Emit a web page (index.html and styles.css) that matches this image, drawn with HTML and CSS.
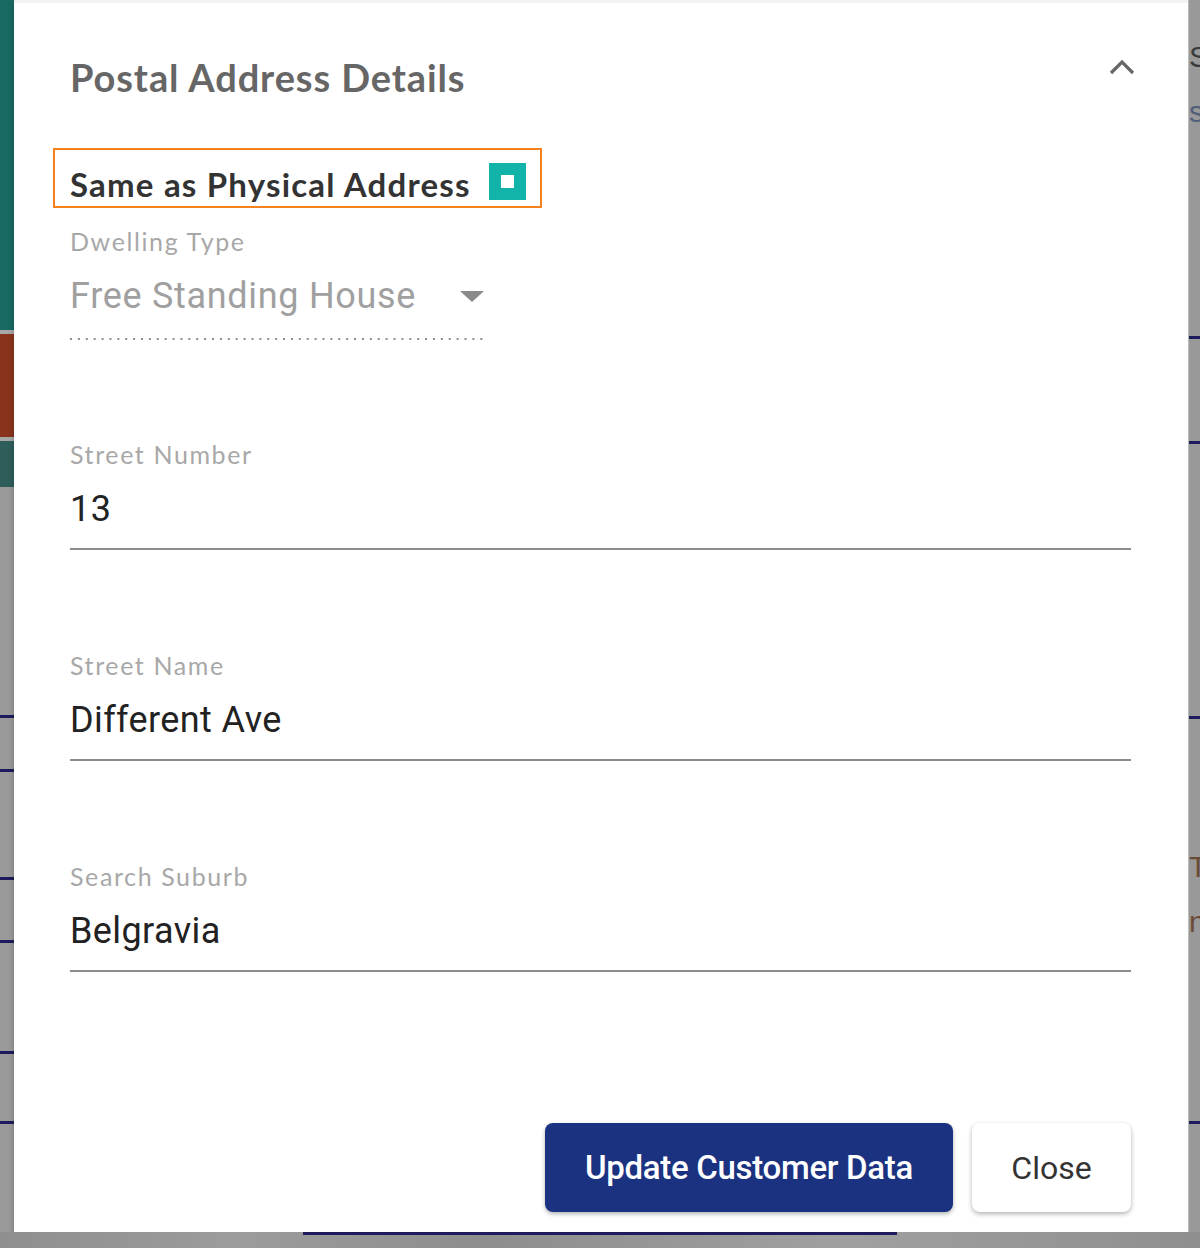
FILE: index.html
```html
<!DOCTYPE html>
<html lang="en">
<head>
  <meta charset="UTF-8">
  <title>Postal Address Details</title>
  <link rel="stylesheet" href="styles.css">
</head>
<body>
  <div class="screen">
    <!-- page behind the dialog, left edge -->
    <div class="edge-left">
      <div class="blk teal"></div>
      <div class="gap"></div>
      <div class="blk rust"></div>
      <div class="gap"></div>
      <div class="blk dark"></div>
      <div class="rest">
        <div class="rule" style="margin-top: 228px"></div>
        <div class="rule" style="margin-top: 51px"></div>
        <div class="rule" style="margin-top: 105px"></div>
        <div class="rule" style="margin-top: 60px"></div>
        <div class="rule" style="margin-top: 108px"></div>
        <div class="rule" style="margin-top: 67px"></div>
      </div>
    </div>

    <div class="dialog">
      <div class="dialog-head">
        <h2 class="title">Postal Address Details</h2>
        <svg class="chevron" width="28" height="18" viewBox="0 0 28 18">
          <path d="M3 15 L14 4 L25 15" fill="none" stroke="#666" stroke-width="3.2"/>
        </svg>
      </div>

      <label class="same-as">
        <span class="same-text">Same as Physical Address</span>
        <span class="check"><span class="check-dot"></span></span>
      </label>

      <div class="field select-field">
        <div class="field-label">Dwelling Type</div>
        <div class="select-row">
          <span class="select-value">Free Standing House</span>
          <span class="caret"></span>
        </div>
      </div>

      <div class="field text-field first">
        <div class="field-label">Street Number</div>
        <div class="field-value">13</div>
      </div>

      <div class="field text-field">
        <div class="field-label">Street Name</div>
        <div class="field-value">Different Ave</div>
      </div>

      <div class="field text-field">
        <div class="field-label">Search Suburb</div>
        <div class="field-value">Belgravia</div>
      </div>

      <div class="actions">
        <button class="btn primary">Update Customer Data</button>
        <button class="btn plain">Close</button>
      </div>
    </div>

    <!-- page behind the dialog, right edge -->
    <div class="edge-right">
      <span class="frag f1">S</span>
      <span class="frag f2">s</span>
      <div class="rule r1"></div>
      <div class="rule r2"></div>
      <div class="rule r3"></div>
      <span class="frag f3">T</span>
      <span class="frag f4">n</span>
      <div class="rule r4"></div>
    </div>

    <div class="edge-bottom">
      <div class="bottom-line"></div>
    </div>
  </div>
</body>
</html>
```

FILE: styles.css
```css
body {
  margin: 0;
  padding: 0;
  background-color: #9a9a9a;
  font-family: Lato, "Open Sans", sans-serif;
}

.screen {
  display: grid;
  grid-template-columns: 14px 1174px 12px;
  grid-template-rows: 1232px 16px;
  width: 1200px;
  height: 1248px;
  overflow: hidden;
}

/* background page strips */
.edge-left {
  display: flex;
  flex-direction: column;
  background-color: #9a9a9a;
}

.blk {
  width: 100%;
}

.teal {
  height: 330px;
  background-color: #196a63;
}

.rust {
  height: 103px;
  background-color: #8a341d;
}

.dark {
  height: 46px;
  background-color: #2e5e5a;
}

.gap {
  height: 4px;
  background-color: #a8a8a8;
}

.rest {
  flex: 1;
  display: flex;
  flex-direction: column;
}

.rule {
  height: 3px;
  background-color: #1c1c5c;
}

.edge-right {
  position: relative;
  overflow: hidden;
  background-color: #999;
  border-left: 1px solid #bdbdbd;
}

.frag {
  position: absolute;
  left: 0;
  font-family: "Liberation Sans", sans-serif;
  font-size: 30px;
  color: #3a3a3a;
}

.f1 { top: 40px; }
.f2 { top: 95px; color: #50607a; }
.f3 { top: 850px; color: #6b4a35; }
.f4 { top: 905px; color: #6b4a35; }

.edge-right .rule {
  position: absolute;
  left: 0;
  width: 100%;
}

.r1 { top: 336px; }
.r2 { top: 441px; }
.r3 { top: 716px; }
.r4 { top: 1121px; }

.edge-bottom {
  grid-column: 1 / 4;
  background: linear-gradient(90deg, #8f8f8f 0, #9c9c9c 20%, #8d8d8d 40%, #a0a0a0 70%, #8f8f8f 100%);
}

.bottom-line {
  margin-left: 303px;
  width: 594px;
  height: 3px;
  background-color: #1c1c5c;
}

/* dialog */
.dialog {
  display: flex;
  flex-direction: column;
  background-color: #ffffff;
  border-top: 3px solid #f2f2f2;
  padding: 0 57px 20px 56px;
  box-shadow: 0 2px 6px rgba(0, 0, 0, 0.25);
}

.dialog-head {
  display: flex;
  justify-content: space-between;
  align-items: flex-start;
  margin-top: 52px;
}

.title {
  margin: 0;
  font-size: 38px;
  line-height: 44px;
  font-weight: 700;
  color: #666;
  letter-spacing: 0.9px;
}

.chevron {
  margin-top: 3px;
  margin-right: -5px;
}

.same-as {
  display: flex;
  align-items: center;
  justify-content: space-between;
  box-sizing: border-box;
  width: 489px;
  height: 60px;
  margin: 49px 0 0 -17px;
  padding: 6px 14px 0 15px;
  border: 2px solid #f5821f;
  font-size: 33px;
  font-weight: 700;
  color: #333;
  letter-spacing: 1.2px;
}

.same-text {
  padding-top: 6px;
}

.check {
  display: flex;
  align-items: center;
  justify-content: center;
  width: 37px;
  height: 37px;
  background-color: #12b3a9;
}

.check-dot {
  width: 13px;
  height: 13px;
  background-color: #fff;
}

.field-label {
  font-size: 25px;
  line-height: 30px;
  color: #a8a8a8;
  letter-spacing: 1.6px;
}

.select-field {
  margin-top: 18px;
  width: 416px;
}

.select-row {
  display: flex;
  align-items: center;
  justify-content: space-between;
  height: 48px;
  padding: 16px 0 20px;
  background: linear-gradient(90deg, #8f8f8f 2px, transparent 2px) left bottom / 7.9px 2px repeat-x;
}

.select-value {
  font-family: Roboto, sans-serif;
  font-size: 36px;
  color: #a0a0a0;
  letter-spacing: 0.7px;
}

.caret {
  width: 0;
  height: 0;
  margin-right: 2px;
  border-left: 12px solid transparent;
  border-right: 12px solid transparent;
  border-top: 11px solid #8a8a8a;
}

.text-field {
  margin-top: 100px;
}

.text-field.first {
  margin-top: 99px;
}

.field-value {
  height: 48px;
  padding: 16px 0 15px;
  border-bottom: 2px solid #8c8c8c;
  font-family: Roboto, sans-serif;
  font-size: 36px;
  line-height: 48px;
  color: #222;
  letter-spacing: 0.4px;
}

.actions {
  display: flex;
  justify-content: flex-end;
  gap: 19px;
  margin-top: auto;
}

.btn {
  height: 89px;
  border: none;
  border-radius: 8px;
  font-family: Roboto, sans-serif;
  cursor: pointer;
}

.primary {
  width: 408px;
  background-color: #1b3281;
  color: #fff;
  font-size: 33px;
  font-weight: 500;
  letter-spacing: -0.3px;
  box-shadow: 0 2px 4px rgba(0, 0, 0, 0.3);
}

.plain {
  width: 159px;
  background-color: #fff;
  color: #333;
  font-size: 32px;
  box-shadow: 0 2px 5px rgba(0, 0, 0, 0.3);
}
```
